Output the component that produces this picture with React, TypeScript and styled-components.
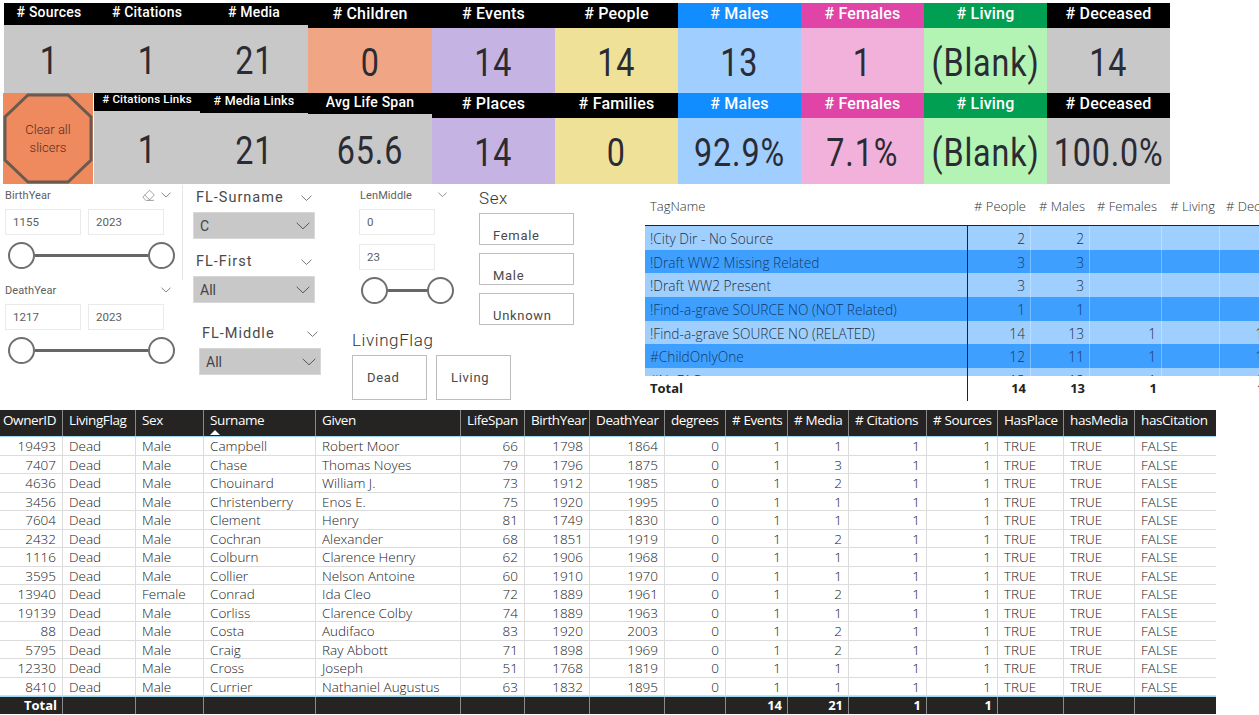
import React from "react";
import styled, { createGlobalStyle } from "styled-components";
import { Eraser } from "lucide-react";

const Global = createGlobalStyle`
  html, body { margin: 0; padding: 0; background: #fff; }
  body { width: 1259px; height: 715px; overflow: hidden; font-family: "Open Sans", "Liberation Sans", sans-serif; }
`;

const DIN = `"Roboto", "Liberation Sans", sans-serif`;
const SEGOE = `"Open Sans", "Liberation Sans", sans-serif`;

const Page = styled.div`
  width: 1259px;
  height: 715px;
  overflow: hidden;
  display: flex;
  flex-direction: column;
`;

/* ---------- KPI cards ---------- */
const KpiBand = styled.section`
  display: flex;
  height: 185px;
  padding: 3px 0 0 4px;
  box-sizing: border-box;
`;
const KpiColumn = styled.div<{ $w: number }>`
  width: ${(p) => p.$w}px;
  display: flex;
  flex-direction: column;
  height: 181px;
`;
const Card = styled.div<{ $h: number }>`
  height: ${(p) => p.$h}px;
  display: flex;
  flex-direction: column;
`;
const CardHead = styled.div<{ $h: number; $c: string; $size: number }>`
  height: ${(p) => p.$h}px;
  flex: none;
  box-sizing: border-box;
  padding-bottom: 4px;
  background: ${(p) => p.$c};
  color: #fff;
  font: 500 ${(p) => p.$size}px/1 ${DIN};
  letter-spacing: 0.2px;
  display: flex;
  align-items: center;
  justify-content: center;
  white-space: nowrap;
`;
const CardValue = styled.div<{ $c: string }>`
  flex: 1;
  background: ${(p) => p.$c};
  display: flex;
  align-items: center;
  justify-content: center;
  white-space: nowrap;
  padding-top: 4px;
`;
const ValueText = styled.span`
  display: inline-block;
  color: #2b2b33;
  font: 400 38px/1 ${DIN};
  letter-spacing: 1px;
  transform: scaleX(0.85);
`;
const ClearButton = styled.button`
  height: 91px;
  flex: none;
  width: 90px;
  border: 0;
  padding: 0 16px;
  margin: 0 0 0 -1px;
  position: relative;
  background: #ee8a5e;
  color: #5a2c1c;
  font: 300 13px/18px ${DIN};
  text-align: center;
`;
const Octagon = styled.svg`
  position: absolute;
  inset: 0;
  width: 100%;
  height: 100%;
`;

/* ---------- Slicers ---------- */
const Middle = styled.section`
  display: flex;
  height: 220px;
  box-sizing: border-box;
`;
const RangeCol = styled.div`
  width: 183px;
  flex: none;
  padding: 0 0 0 5px;
  box-sizing: border-box;
`;
const RangeBlock = styled.div<{ $rule?: boolean }>`
  height: 95px;
  padding-top: 4px;
  box-sizing: border-box;
  border-right: 1px solid ${(p) => (p.$rule ? "#e6e6e6" : "transparent")};
`;
const SlicerHead = styled.div`
  height: 20px;
  display: flex;
  align-items: center;
  justify-content: space-between;
  gap: 6px;
  width: 166px;
  padding-bottom: 8px;
  box-sizing: border-box;
`;
const SmallTitle = styled.span`
  font: 400 11px/1 ${DIN};
  color: #605e5c;
  letter-spacing: 0.1px;
  flex: 1;
`;
const InputRow = styled.div`
  display: flex;
  gap: 7px;
`;
const NumBox = styled.div`
  width: 76px;
  height: 26px;
  box-sizing: border-box;
  border: 1px solid #eaeaea;
  padding-left: 7px;
  font: 400 11.5px/24px ${DIN};
  color: #605e5c;
`;
const Slider = styled.div<{ $w: number }>`
  width: ${(p) => p.$w}px;
  height: 28px;
  display: flex;
  align-items: center;
`;
const Knob = styled.div`
  width: 27px;
  height: 27px;
  flex: none;
  box-sizing: border-box;
  border: 2px solid #6f6f6f;
  border-radius: 50%;
  background: #fff;
`;
const Track = styled.div`
  flex: 1;
  height: 3px;
  background: #666;
`;
const SliderWrap = styled.div<{ $top: number; $left: number }>`
  margin: ${(p) => p.$top}px 0 0 ${(p) => p.$left}px;
`;

const DropCol = styled.div`
  width: 176px;
  flex: none;
  box-sizing: border-box;
  padding: 3px 0 0 10px;
`;
const DropBlock = styled.div<{ $left?: number; $top?: number }>`
  width: 122px;
  margin-left: ${(p) => p.$left ?? 0}px;
  margin-top: ${(p) => p.$top ?? 0}px;
`;
const DropHead = styled.div`
  height: 24px;
  display: flex;
  align-items: center;
  justify-content: space-between;
  padding: 0 3px 4px;
  box-sizing: border-box;
`;
const DropTitle = styled.span`
  font: 400 14.5px/1 ${DIN};
  letter-spacing: 1px;
  color: #4a4a4a;
`;
const DropBox = styled.div`
  height: 27px;
  background: #c8c8c8;
  border: 1px solid #d8d8d8;
  box-sizing: border-box;
  display: flex;
  align-items: center;
  justify-content: space-between;
  padding: 0 4px 0 6px;
  font: 400 14px/1 ${DIN};
  color: #444;
`;

const ChipZone = styled.div`
  width: 286px;
  flex: none;
  display: flex;
  flex-direction: column;
`;
const ChipTop = styled.div`
  height: 147px;
  display: flex;
`;
const LenCol = styled.div`
  width: 120px;
  flex: none;
  padding: 4px 0 0 0;
  box-sizing: border-box;
`;
const LenHead = styled.div`
  height: 20px;
  width: 88px;
  display: flex;
  align-items: center;
  justify-content: space-between;
  padding: 0 0 8px 1px;
  box-sizing: border-box;
`;
const LenStack = styled.div`
  display: flex;
  flex-direction: column;
  gap: 9px;
`;

const ChipTitle = styled.div`
  font: 300 17px/1 ${DIN};
  letter-spacing: 0.6px;
  color: #333;
`;
const SexChip = styled.div`
  width: 95px;
  height: 32px;
  box-sizing: border-box;
  border: 1px solid #bdbdbd;
  padding: 14px 0 0 13px;
  font: 400 13px/16px ${DIN};
  letter-spacing: 0.7px;
  color: #4a4a4a;
  overflow: hidden;
`;
const SexStack = styled.div`
  display: flex;
  flex-direction: column;
  gap: 8px;
  margin-top: 6px;
`;
const SexCol = styled.div`
  padding-top: 5px;
  width: 166px;
  flex: none;
  box-sizing: border-box;
`;
const FlagGroup = styled.div`
  margin-left: -7px;
`;
const FlagRow = styled.div`
  display: flex;
  gap: 9px;
  margin-top: 6px;
`;
const FlagChip = styled.div`
  width: 75px;
  height: 45px;
  box-sizing: border-box;
  border: 1px solid #bdbdbd;
  padding-left: 14px;
  font: 400 13px/43px ${DIN};
  letter-spacing: 0.7px;
  color: #4a4a4a;
`;

/* ---------- Matrix ---------- */
const Matrix = styled.div`
  flex: 1;
  min-width: 0;
  overflow: hidden;
  font-family: ${SEGOE};
`;
const matrixCols = "323px 63px 59px 72px 58px 57px";
const MatrixHead = styled.div`
  display: grid;
  grid-template-columns: ${matrixCols};
  height: 41px;
  width: 632px;
  border-bottom: 1px solid #222;
  box-sizing: border-box;
  align-items: center;
  padding-top: 3px;
`;
const MHeadCell = styled.div<{ $left?: number }>`
  font: 300 13px/1 ${SEGOE};
  color: #333;
  text-align: ${(p) => (p.$left ? "left" : "right")};
  padding: ${(p) => (p.$left ? `0 0 0 ${p.$left}px` : "0 5px 0 0")};
  white-space: nowrap;
`;
const MBody = styled.div`
  height: 150px;
  overflow: hidden;
`;
const MRow = styled.div<{ $dark: boolean }>`
  display: grid;
  grid-template-columns: ${matrixCols};
  width: 632px;
  height: 23.7px;
  background: ${(p) => (p.$dark ? "#3f9fff" : "#9ecfff")};
  color: ${(p) => (p.$dark ? "#123a66" : "#1f2f40")};
`;
const MCell = styled.div<{ $first?: boolean }>`
  font: 300 13.7px/26px ${SEGOE};
  text-align: ${(p) => (p.$first ? "left" : "right")};
  padding: ${(p) => (p.$first ? "0 0 0 5px" : "0 5px 0 0")};
  border-right: 1px solid ${(p) => (p.$first ? "#222" : "rgba(255,255,255,.3)")};
  white-space: nowrap;
  overflow: hidden;
`;
const MTotal = styled.div`
  display: grid;
  grid-template-columns: ${matrixCols};
  width: 632px;
  height: 23px;
`;
const MTotalCell = styled.div<{ $first?: boolean }>`
  font: 700 13px/25px ${SEGOE};
  color: #222;
  text-align: ${(p) => (p.$first ? "left" : "right")};
  padding: ${(p) => (p.$first ? "0 0 0 5px" : "0 5px 0 0")};
  border-right: ${(p) => (p.$first ? "1px solid #222" : "0")};
`;

/* ---------- Table ---------- */
const gridCols = "63px 73px 68px 112px 145px 64px 65px 75px 61px 62px 61px 78px 71px 66px 71px 80px";
const TableWrap = styled.section`
  width: 1216px;
  font-family: ${SEGOE};
`;
const THead = styled.div`
  display: grid;
  grid-template-columns: ${gridCols};
  height: 27px;
  margin-top: 5px;
  background: #252423;
  border-bottom: 1px solid #9fd8ee;
  box-sizing: border-box;
`;
const TH = styled.div`
  font: 400 13.5px/21px ${SEGOE};
  letter-spacing: -0.4px;
  color: #fff;
  padding-left: 6px;
  border-right: 1px solid #8a8a8a;
  white-space: nowrap;
  position: relative;
  &:first-child { padding-left: 3px; }
  &:last-child { border-right: 0; }
`;
const SortCaret = styled.span`
  position: absolute;
  left: 6px;
  bottom: 1px;
  width: 0;
  height: 0;
  border-left: 5px solid transparent;
  border-right: 5px solid transparent;
  border-bottom: 5px solid #fff;
`;
const TRow = styled.div`
  display: grid;
  grid-template-columns: ${gridCols};
  height: 18.5px;
  border-bottom: 1px solid #dcdcdc;
  box-sizing: border-box;
`;
const TD = styled.div<{ $num?: boolean }>`
  font: 300 13.5px/19px ${SEGOE};
  color: #222;
  text-align: ${(p) => (p.$num ? "right" : "left")};
  padding: ${(p) => (p.$num ? "0 6px 0 0" : "0 0 0 6px")};
  border-right: 1px solid #dcdcdc;
  white-space: nowrap;
  overflow: hidden;
  &:last-child { border-right: 0; }
`;
const TFoot = styled.div`
  display: grid;
  grid-template-columns: ${gridCols};
  height: 18px;
  background: #252423;
  border-top: 1px solid #9fd8ee;
  box-sizing: border-box;
`;
const TF = styled.div`
  font: 700 13px/17px ${SEGOE};
  color: #fff;
  text-align: right;
  padding-right: 5px;
  border-right: 1px solid #8a8a8a;
  &:last-child { border-right: 0; }
`;

/* ---------- Icons ---------- */
const Chevron = ({ w = 10, color = "#777" }: { w?: number; color?: string }) => (
  <svg width={w} height={w / 2 + 1} viewBox="0 0 20 11" fill="none">
    <polyline points="1,1 10,9.5 19,1" stroke={color} strokeWidth={w > 12 ? 1.4 : 1.8} />
  </svg>
);

/* ---------- Data ---------- */
const GREY = "#c8c8c8";
const PURPLE = "#c5b4e3";
const YELLOW = "#f0e199";
const BLUE = "#9fceff";
const PINK = "#f1b1da";
const GREEN = "#b3f3b3";

type K = { t: string; v: string; hh: number; hs: number; c?: string; bg: string };
const columns: { w: number; top: K; bottom?: K }[] = [
  { w: 90, top: { t: "# Sources", v: "1", hh: 22, hs: 14, bg: GREY } },
  { w: 106, top: { t: "# Citations", v: "1", hh: 22, hs: 14, bg: GREY }, bottom: { t: "# Citations Links", v: "1", hh: 18, hs: 11.5, bg: GREY } },
  { w: 108, top: { t: "# Media", v: "21", hh: 22, hs: 14, bg: GREY }, bottom: { t: "# Media Links", v: "21", hh: 20, hs: 12.5, bg: GREY } },
  { w: 124, top: { t: "# Children", v: "0", hh: 25, hs: 16, bg: "#f0a584" }, bottom: { t: "Avg Life Span", v: "65.6", hh: 21, hs: 14, bg: GREY } },
  { w: 123, top: { t: "# Events", v: "14", hh: 25, hs: 16, bg: PURPLE }, bottom: { t: "# Places", v: "14", hh: 25, hs: 16, bg: PURPLE } },
  { w: 123, top: { t: "# People", v: "14", hh: 25, hs: 16, bg: YELLOW }, bottom: { t: "# Families", v: "0", hh: 25, hs: 16, bg: YELLOW } },
  { w: 123, top: { t: "# Males", v: "13", hh: 25, hs: 16, c: "#118dff", bg: BLUE }, bottom: { t: "# Males", v: "92.9%", hh: 25, hs: 16, c: "#118dff", bg: BLUE } },
  { w: 123, top: { t: "# Females", v: "1", hh: 25, hs: 16, c: "#e044a7", bg: PINK }, bottom: { t: "# Females", v: "7.1%", hh: 25, hs: 16, c: "#e044a7", bg: PINK } },
  { w: 123, top: { t: "# Living", v: "(Blank)", hh: 25, hs: 16, c: "#009f52", bg: GREEN }, bottom: { t: "# Living", v: "(Blank)", hh: 25, hs: 16, c: "#009f52", bg: GREEN } },
  { w: 123, top: { t: "# Deceased", v: "14", hh: 25, hs: 16, bg: GREY }, bottom: { t: "# Deceased", v: "100.0%", hh: 25, hs: 16, bg: GREY } },
];

const matrixRows = [
  ["!City Dir - No Source", "2", "2", "", "", ""],
  ["!Draft WW2 Missing Related", "3", "3", "", "", ""],
  ["!Draft WW2 Present", "3", "3", "", "", ""],
  ["!Find-a-grave SOURCE NO (NOT Related)", "1", "1", "", "", ""],
  ["!Find-a-grave SOURCE NO (RELATED)", "14", "13", "1", "", "14"],
  ["#ChildOnlyOne", "12", "11", "1", "", "12"],
  ["#NoFAG", "13", "12", "1", "", "13"],
];

const heads = ["OwnerID", "LivingFlag", "Sex", "Surname", "Given", "LifeSpan", "BirthYear", "DeathYear", "degrees", "# Events", "# Media", "# Citations", "# Sources", "HasPlace", "hasMedia", "hasCitation"];
const rows: [string, string, string, string, string, string, string, string][] = [
  ["19493", "Male", "Campbell", "Robert Moor", "66", "1798", "1864", "1"],
  ["7407", "Male", "Chase", "Thomas Noyes", "79", "1796", "1875", "3"],
  ["4636", "Male", "Chouinard", "William J.", "73", "1912", "1985", "2"],
  ["3456", "Male", "Christenberry", "Enos E.", "75", "1920", "1995", "1"],
  ["7604", "Male", "Clement", "Henry", "81", "1749", "1830", "1"],
  ["2432", "Male", "Cochran", "Alexander", "68", "1851", "1919", "2"],
  ["1116", "Male", "Colburn", "Clarence Henry", "62", "1906", "1968", "1"],
  ["3595", "Male", "Collier", "Nelson Antoine", "60", "1910", "1970", "1"],
  ["13940", "Female", "Conrad", "Ida Cleo", "72", "1889", "1961", "2"],
  ["19139", "Male", "Corliss", "Clarence Colby", "74", "1889", "1963", "1"],
  ["88", "Male", "Costa", "Audifaco", "83", "1920", "2003", "2"],
  ["5795", "Male", "Craig", "Ray Abbott", "71", "1898", "1969", "2"],
  ["12330", "Male", "Cross", "Joseph", "51", "1768", "1819", "1"],
  ["8410", "Male", "Currier", "Nathaniel Augustus", "63", "1832", "1895", "1"],
];

const Kpi = ({ k, h }: { k: K; h: number }) => (
  <Card $h={h}>
    <CardHead $h={k.hh} $c={k.c ?? "#000"} $size={k.hs}>{k.t}</CardHead>
    <CardValue $c={k.bg}><ValueText>{k.v}</ValueText></CardValue>
  </Card>
);

const RangeSlicer = ({ title, a, b, eraser }: { title: string; a: string; b: string; eraser?: boolean }) => (
  <RangeBlock $rule={eraser}>
    <SlicerHead>
      <SmallTitle>{title}</SmallTitle>
      {eraser && <Eraser size={13} color="#777" strokeWidth={1.3} />}
      <Chevron />
    </SlicerHead>
    <InputRow>
      <NumBox>{a}</NumBox>
      <NumBox>{b}</NumBox>
    </InputRow>
    <SliderWrap $top={6} $left={3}>
      <Slider $w={167}><Knob /><Track /><Knob /></Slider>
    </SliderWrap>
  </RangeBlock>
);

const Dropdown = ({ title, value, left, top }: { title: string; value: string; left?: number; top?: number }) => (
  <DropBlock $left={left} $top={top}>
    <DropHead>
      <DropTitle>{title}</DropTitle>
      <Chevron w={11} />
    </DropHead>
    <DropBox>
      {value}
      <Chevron w={14} color="#555" />
    </DropBox>
  </DropBlock>
);

export default function App() {
  return (
    <Page>
      <Global />
      <KpiBand>
        {columns.map((c, i) => (
          <KpiColumn key={i} $w={c.w}>
            <Kpi k={c.top} h={90} />
            {c.bottom ? (
              <Kpi k={c.bottom} h={91} />
            ) : (
              <ClearButton>
                <Octagon viewBox="0 0 90 91" preserveAspectRatio="none">
                  <polygon points="25,2 65,2 88,24 88,67 65,89 25,89 2,67 2,24" fill="none" stroke="#6b5a50" strokeWidth="3" />
                </Octagon>
                Clear all slicers
              </ClearButton>
            )}
          </KpiColumn>
        ))}
      </KpiBand>
      <Middle>
        <RangeCol>
          <RangeSlicer title="BirthYear" a="1155" b="2023" eraser />
          <RangeSlicer title="DeathYear" a="1217" b="2023" />
        </RangeCol>
        <DropCol>
          <Dropdown title="FL-Surname" value="C" />
          <Dropdown title="FL-First" value="All" top={13} />
          <Dropdown title="FL-Middle" value="All" left={6} top={21} />
        </DropCol>
        <ChipZone>
          <ChipTop>
            <LenCol>
              <LenHead>
                <SmallTitle>LenMiddle</SmallTitle>
                <Chevron w={9} />
              </LenHead>
              <LenStack>
                <NumBox>0</NumBox>
                <NumBox>23</NumBox>
              </LenStack>
              <SliderWrap $top={6} $left={2}>
                <Slider $w={93}><Knob /><Track /><Knob /></Slider>
              </SliderWrap>
            </LenCol>
            <SexCol>
              <ChipTitle>Sex</ChipTitle>
              <SexStack>
                <SexChip>Female</SexChip>
                <SexChip>Male</SexChip>
                <SexChip>Unknown</SexChip>
              </SexStack>
            </SexCol>
          </ChipTop>
          <FlagGroup>
            <ChipTitle>LivingFlag</ChipTitle>
            <FlagRow>
              <FlagChip>Dead</FlagChip>
              <FlagChip>Living</FlagChip>
            </FlagRow>
          </FlagGroup>
        </ChipZone>
        <Matrix>
          <MatrixHead>
            <MHeadCell $left={5}>TagName</MHeadCell>
            <MHeadCell># People</MHeadCell>
            <MHeadCell># Males</MHeadCell>
            <MHeadCell># Females</MHeadCell>
            <MHeadCell># Living</MHeadCell>
            <MHeadCell $left={6}># Deceased</MHeadCell>
          </MatrixHead>
          <MBody>
            {matrixRows.map((r, i) => (
              <MRow key={i} $dark={i % 2 === 1}>
                {r.map((c, j) => (
                  <MCell key={j} $first={j === 0}>{c}</MCell>
                ))}
              </MRow>
            ))}
          </MBody>
          <MTotal>
            <MTotalCell $first>Total</MTotalCell>
            <MTotalCell>14</MTotalCell>
            <MTotalCell>13</MTotalCell>
            <MTotalCell>1</MTotalCell>
            <MTotalCell></MTotalCell>
            <MTotalCell>14</MTotalCell>
          </MTotal>
        </Matrix>
      </Middle>
      <TableWrap>
        <THead>
          {heads.map((h) => (
            <TH key={h}>
              {h}
              {h === "Surname" && <SortCaret />}
            </TH>
          ))}
        </THead>
        {rows.map((r) => (
          <TRow key={r[0]}>
            <TD $num>{r[0]}</TD>
            <TD>Dead</TD>
            <TD>{r[1]}</TD>
            <TD>{r[2]}</TD>
            <TD>{r[3]}</TD>
            <TD $num>{r[4]}</TD>
            <TD $num>{r[5]}</TD>
            <TD $num>{r[6]}</TD>
            <TD $num>0</TD>
            <TD $num>1</TD>
            <TD $num>{r[7]}</TD>
            <TD $num>1</TD>
            <TD $num>1</TD>
            <TD>TRUE</TD>
            <TD>TRUE</TD>
            <TD>FALSE</TD>
          </TRow>
        ))}
        <TFoot>
          <TF>Total</TF>
          <TF /><TF /><TF /><TF /><TF /><TF /><TF /><TF />
          <TF>14</TF>
          <TF>21</TF>
          <TF>1</TF>
          <TF>1</TF>
          <TF /><TF /><TF />
        </TFoot>
      </TableWrap>
    </Page>
  );
}
